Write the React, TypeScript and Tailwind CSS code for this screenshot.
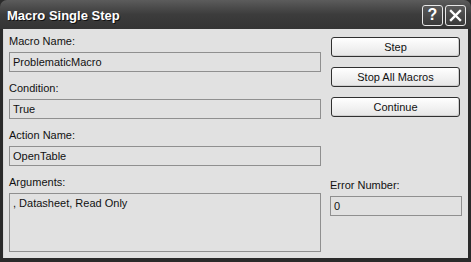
import React from "react";

const font = { fontFamily: '"Liberation Sans", Arial, sans-serif' };

function Field({ label, value, tall }: { label: string; value: string; tall?: boolean }) {
  return (
    <div className="flex flex-col">
      <div className="h-[13px] leading-[13px] text-[11px] text-[#111]">{label}</div>
      <div
        className={`mt-[4px] border border-[#8f8f8f] bg-[#e1e1e1] pl-[3px] text-[11px] text-[#111] leading-[13px] ${tall ? "h-[59px] pt-[3px]" : "h-[20px] pt-[3px]"}`}
      >
        {value}
      </div>
    </div>
  );
}

function Btn({ children }: { children: React.ReactNode }) {
  return (
    <div className="h-[20px] w-[129px] rounded-[3px] border border-[#303030] bg-gradient-to-b from-[#ffffff] to-[#e6e6e6] flex items-center justify-center text-[11px] text-[#111] shadow-[inset_-1px_-1px_0_#cfcfcf]">
      {children}
    </div>
  );
}

function TitleBtn({ children }: { children: React.ReactNode }) {
  return (
    <div className="w-[21px] h-[21px] rounded-[3px] border border-[#e8e8e8] bg-gradient-to-b from-[#5a5a5a] to-[#3a3a3a] flex items-center justify-center">
      {children}
    </div>
  );
}

export default function App() {
  return (
    <div style={font} className="w-[471px] h-[262px] bg-[#2a2a2a] flex flex-col overflow-hidden">
      <div className="h-[29px] rounded-t-[7px] bg-gradient-to-b from-[#5c5c5c] via-[#3c3c3c] to-[#343434] flex items-center pl-[7px] pr-[5px] pt-[2px]">
        <div className="text-white font-bold text-[13px] flex-1 [text-shadow:1px_1px_0_#111]">Macro Single Step</div>
        <div className="flex gap-[2px] -mt-[1px]">
          <TitleBtn>
            <span className="text-white font-bold text-[16px] leading-none">?</span>
          </TitleBtn>
          <TitleBtn>
            <svg width="13" height="13" viewBox="0 0 13 13">
              <path d="M2 2 L11 11 M11 2 L2 11" stroke="white" strokeWidth="2.4" strokeLinecap="square" />
            </svg>
          </TitleBtn>
        </div>
      </div>
      <div className="flex-1 px-[3px] pb-[4px] bg-[#2a2a2a]">
        <div className="h-full bg-[#e1e1e1] border-l border-[#d8d8d8] flex pl-[5px] pt-[6px]">
          <div className="w-[312px] flex flex-col gap-[10px]">
            <Field label="Macro Name:" value="ProblematicMacro" />
            <Field label="Condition:" value="True" />
            <Field label="Action Name:" value="OpenTable" />
            <Field label="Arguments:" value=", Datasheet, Read Only" tall />
          </div>
          <div className="ml-[10px] flex flex-col pt-[2px]">
            <div className="flex flex-col gap-[10px]">
              <Btn>Step</Btn>
              <Btn>Stop All Macros</Btn>
              <Btn>Continue</Btn>
            </div>
            <div className="mt-[62px] -ml-[1px] w-[132px]">
              <Field label="Error Number:" value="0" />
            </div>
          </div>
        </div>
      </div>
    </div>
  );
}
